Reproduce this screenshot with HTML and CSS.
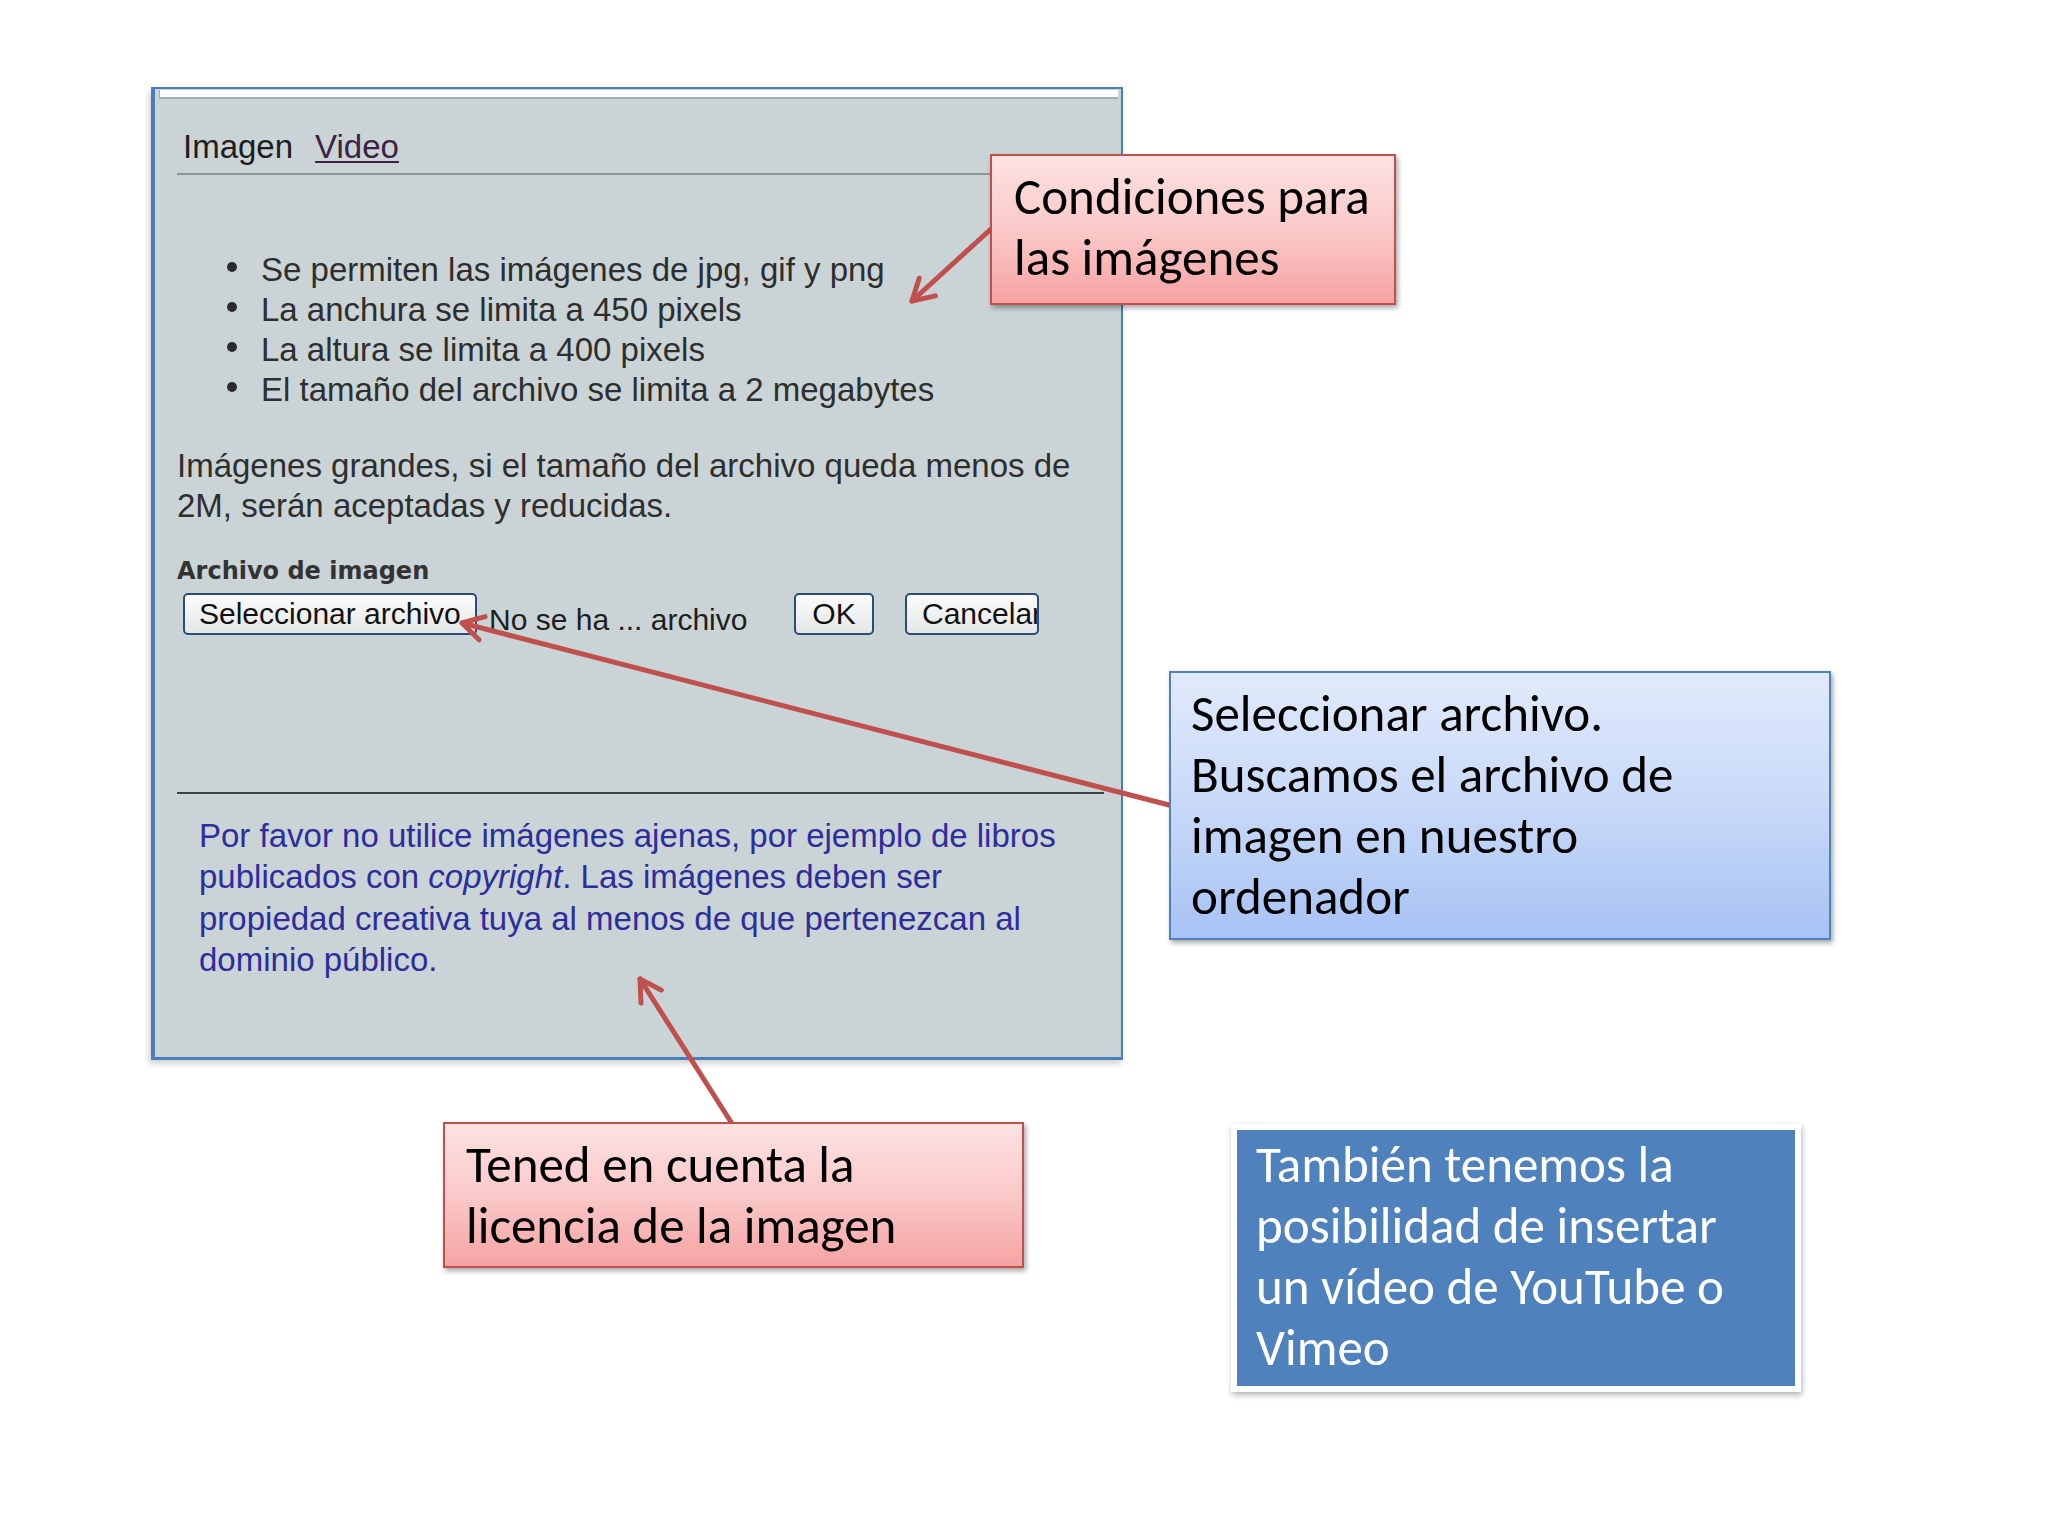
FILE: index.html
```html
<!DOCTYPE html>
<html lang="es">
<head>
<meta charset="utf-8">
<title>Imagen / Video</title>
<link rel="stylesheet" href="styles.css">
</head>
<body>
<div class="slide">
  <div class="panel">
    <div class="strip"></div>
    <div class="tabs"><span class="tab">Imagen</span><a class="tab link">Video</a></div>
    <ul class="rules">
      <li>Se permiten las imágenes de jpg, gif y png</li>
      <li>La anchura se limita a 450 pixels</li>
      <li>La altura se limita a 400 pixels</li>
      <li>El tamaño del archivo se limita a 2 megabytes</li>
    </ul>
    <p class="note">Imágenes grandes, si el tamaño del archivo queda menos de<br>2M, serán aceptadas y reducidas.</p>
    <div class="label">Archivo de imagen</div>
    <div class="filerow">
      <span class="btn btn-file">Seleccionar archivo</span>
      <span class="nofile">No se ha ... archivo</span>
      <span class="btn btn-ok">OK</span>
      <span class="btn btn-cancel">Cancelar</span>
    </div>
    <div class="sep"></div>
    <p class="license">Por favor no utilice imágenes ajenas, por ejemplo de libros<br>publicados con <i>copyright</i>. Las imágenes deben ser<br>propiedad creativa tuya al menos de que pertenezcan al<br>dominio público.</p>
  </div>

  <svg class="arrows" width="2048" height="1536" viewBox="0 0 2048 1536">
    <g fill="none" stroke="#c0504d" stroke-width="5" stroke-linecap="round" stroke-linejoin="round">
      <path d="M991 229 L912 301"/>
      <path d="M935.4 295.9 L912 301 L919.3 278.1"/>
      <path d="M1169 805 L462 623"/>
      <path d="M479.1 639.8 L462 623 L485.1 616.6"/>
      <path d="M731 1122 L640 979"/>
      <path d="M641 1003 L640 979 L661.3 990.1"/>
    </g>
  </svg>

  <div class="callout red c1">Condiciones para<br>las imágenes</div>
  <div class="callout blue c2">Seleccionar archivo.<br>Buscamos el archivo de<br>imagen en nuestro<br>ordenador</div>
  <div class="callout red c3">Tened en cuenta la<br>licencia de la imagen</div>
  <div class="callout dark c4">También tenemos la<br>posibilidad de insertar<br>un vídeo de YouTube o<br>Vimeo</div>
</div>
</body>
</html>
```

FILE: styles.css
```css
html, body {
  margin: 0;
  padding: 0;
  background: #ffffff;
}

.slide {
  position: relative;
  width: 2048px;
  height: 1536px;
  box-sizing: border-box;
  padding: 87px 0 0 151px;
  background: #ffffff;
  overflow: hidden;
}

/* ---------- Screenshot panel ---------- */
.panel {
  width: 972px;
  height: 973px;
  box-sizing: border-box;
  background: #cad4d6;
  border-style: solid;
  border-color: #4a7dbd;
  border-width: 2px 2px 3px 4px;
  box-shadow: -2px 4px 6px rgba(0, 0, 0, 0.18);
  padding: 0 17px 0 22px;
  font-family: "Liberation Sans", Arial, sans-serif;
  color: #2e2e2e;
}

.strip {
  height: 7px;
  margin: 1px -14px 0 -18px;
  background: #ffffff;
  border-left: 1px solid #a6aeb1;
  border-bottom: 2px solid #a6aeb1;
}

.tabs {
  margin-top: 28px;
  padding: 0 0 6px 6px;
  border-bottom: 2px solid #8e9698;
  font-size: 33px;
  line-height: 40px;
  display: flex;
}

.tab {
  color: #1e1e1e;
}

.link {
  margin-left: 22px;
  color: #3d2340;
  text-decoration: underline;
  text-decoration-thickness: 2px;
  text-underline-offset: 3px;
}

.rules {
  list-style: none;
  margin: 75px 0 0;
  padding: 0;
  font-size: 33px;
  line-height: 40px;
}

.rules li {
  display: flex;
  align-items: center;
}

.rules li::before {
  content: "";
  flex: none;
  width: 10px;
  height: 10px;
  border-radius: 50%;
  background: #2a2a2a;
  margin: 0 24px 7px 50px;
}

.note {
  margin: 36px 0 0;
  font-size: 33px;
  line-height: 40px;
}

.label {
  margin-top: 30px;
  font-family: "DejaVu Sans", Verdana, sans-serif;
  font-weight: bold;
  font-size: 24px;
  line-height: 30px;
  color: #333333;
}

.filerow {
  margin-top: 7px;
  padding-left: 6px;
  display: flex;
  align-items: flex-start;
  height: 42px;
}

.btn {
  box-sizing: border-box;
  height: 42px;
  border: 2px solid #2c4c78;
  border-radius: 5px;
  background: linear-gradient(#fcfcfc, #e4e6e6);
  font-size: 30px;
  line-height: 38px;
  color: #111111;
  white-space: nowrap;
  overflow: hidden;
}

.btn-file {
  width: 294px;
  padding-left: 14px;
}

.nofile {
  width: 317px;
  box-sizing: border-box;
  padding-left: 12px;
  margin-top: 7px;
  font-size: 30px;
  line-height: 40px;
  color: #1e1e1e;
  white-space: nowrap;
}

.btn-ok {
  width: 80px;
  text-align: center;
}

.btn-cancel {
  width: 134px;
  margin-left: 31px;
  padding-left: 15px;
}

.sep {
  margin-top: 157px;
  height: 2px;
  background: #3c4446;
}

.license {
  margin: 21px 0 0 22px;
  font-size: 33px;
  line-height: 41.3px;
  color: #2d2d9c;
}

/* ---------- Annotation arrows ---------- */
.arrows {
  position: absolute;
  left: 0;
  top: 0;
  pointer-events: none;
}

/* ---------- Callouts ---------- */
.callout {
  position: absolute;
  box-sizing: border-box;
  font-family: "Carlito", "Calibri", "Lato", sans-serif;
  font-size: 51px;
  line-height: 61px;
  color: #000000;
  white-space: nowrap;
  box-shadow: 2px 3px 5px rgba(0, 0, 0, 0.35);
}

.red {
  border: 2px solid #c0504d;
  background: linear-gradient(#fde2e2, #fac9c9 50%, #f5a3a2);
}

.blue {
  border: 2px solid #4f81bd;
  background: linear-gradient(#e1eafb, #c8d9f8 50%, #a7c2f4);
}

.dark {
  border: 6px solid #ffffff;
  background: #4f81bd;
  color: #ffffff;
  box-shadow: 1px 3px 6px rgba(0, 0, 0, 0.3);
}

.c1 {
  left: 990px;
  top: 154px;
  width: 406px;
  height: 151px;
  padding: 10px 0 0 22px;
}

.c2 {
  left: 1169px;
  top: 671px;
  width: 662px;
  height: 269px;
  padding: 10px 0 0 20px;
}

.c3 {
  left: 443px;
  top: 1122px;
  width: 581px;
  height: 146px;
  padding: 10px 0 0 21px;
}

.c4 {
  left: 1231px;
  top: 1124px;
  width: 570px;
  height: 268px;
  padding: 4px 0 0 19px;
}
```
